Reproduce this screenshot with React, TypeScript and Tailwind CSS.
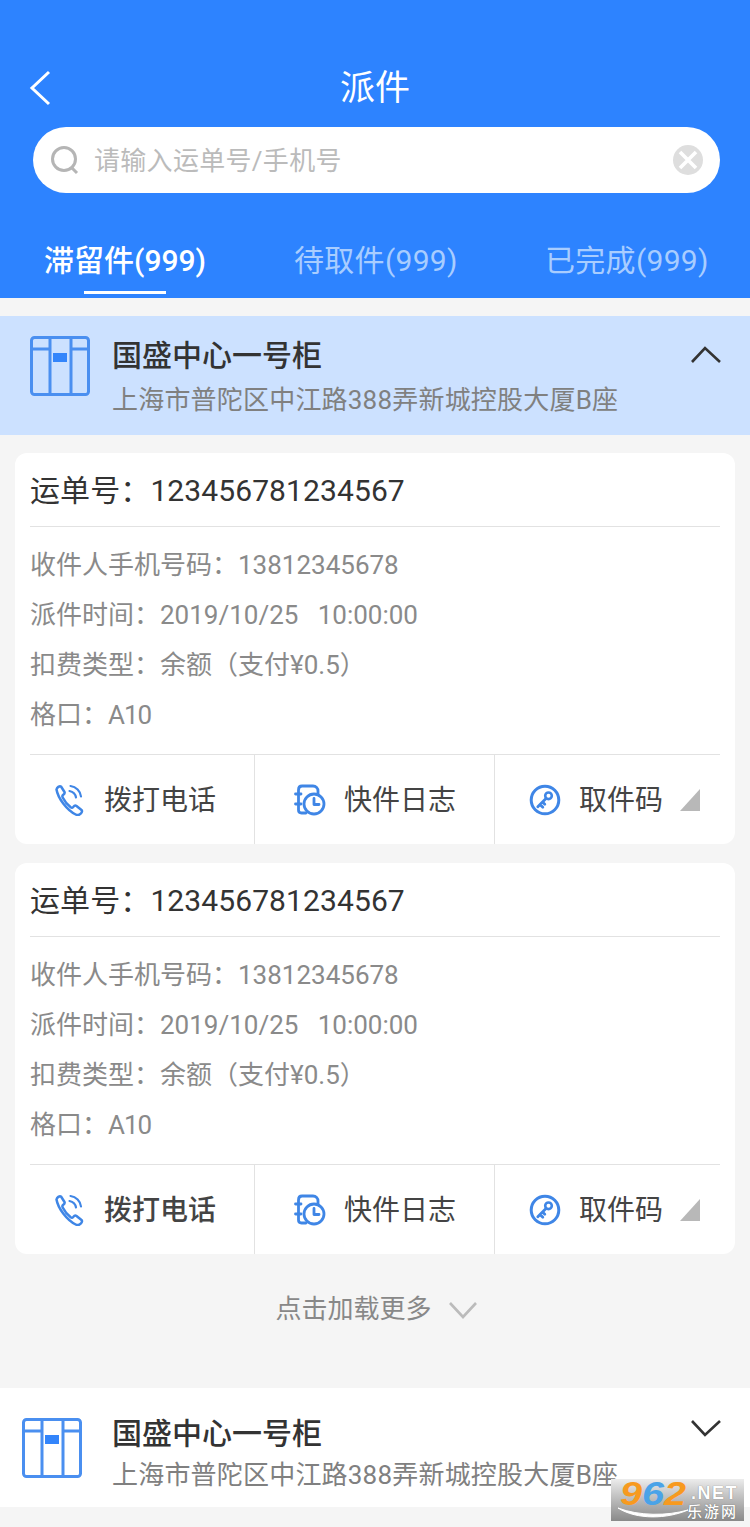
import React from "react";

const FONT = "font-['Roboto','Noto_Sans_CJK_SC',sans-serif]";

function Cabinet({ x = "" }: { x?: string }) {
  return (
    <svg width="60" height="60" viewBox="0 0 60 60" fill="none" className={x}>
      <rect x="1.500" y="1.500" width="57" height="57" rx="3" stroke="#4a8ff0" strokeWidth="3" />
      <path d="M20 2V58M41 2V58M2 13H20M41 13H58" stroke="#4a8ff0" strokeWidth="3" />
      <rect x="23" y="17" width="14" height="9" fill="#3385fb" />
    </svg>
  );
}

function PhoneIcon() {
  return (
    <svg width="33" height="32" viewBox="0 0 32 32" fill="none" stroke="#3f86e6" strokeWidth="2.500" strokeLinecap="round" strokeLinejoin="round">
      <path d="M3 5.500C3.500 3.500 6 1.500 7.500 2.500L11 8c.5 1-.5 2.200-1.500 3-.8.7-.8 1.500-.3 2.500 1.600 3.200 4.500 7 8 9.800 1 .7 1.800.5 2.500-.3.8-1 2-1.800 3-1.200l5.300 4.200c1 .9.4 2.500-.8 3.700-1.200 1.200-3 1.800-5 .8C13.500 26 4.500 14.500 3 5.500z" />
      <path d="M16 7c3.500.7 6 3.300 6.500 6.500M17 2c5.500.8 10 5.200 10.500 10.500" strokeWidth="2.200" />
    </svg>
  );
}

function LogIcon() {
  return (
    <svg width="32" height="32" viewBox="0 0 32 32" fill="none" stroke="#3f86e6" strokeWidth="2.800" strokeLinecap="round" strokeLinejoin="round">
      <path d="M12 29H7.500C5.500 29 4.500 27.800 4.500 26V6C4.500 3.800 5.800 2 8 2h11c3 0 5 2 5 5v3" />
      <path d="M1.500 10H7M1.500 20H7" />
      <circle cx="20" cy="20" r="10" />
      <path d="M20 14.500V20.500H25" />
    </svg>
  );
}

function KeyIcon() {
  return (
    <svg width="32" height="32" viewBox="0 0 32 32" fill="none" stroke="#3f86e6" strokeLinecap="round" strokeLinejoin="round">
      <circle cx="16" cy="16" r="13.800" strokeWidth="3" />
      <circle cx="19.500" cy="11.800" r="3.300" strokeWidth="2.600" />
      <path d="M17 14.500L8.800 22.800M11 20.500l2.800 2.800M13.500 18l2.300 2.300" strokeWidth="2.800" />
    </svg>
  );
}

function Action({ icon, label, bold, w, pl, gap, tri }: { icon: React.ReactNode; label: string; bold?: boolean; w: string; pl: string; gap: string; tri?: boolean }) {
  return (
    <div className={`${w} ${pl} ${gap} flex items-center h-full relative`}>
      {icon}
      <span className={`text-[28px] leading-none pt-[2px] text-[#444] ${bold ? "font-medium" : ""}`}>{label}</span>
      {tri ? (
        <svg width="20" height="22" viewBox="0 0 20 22" className="-ml-px mt-[1px]">
          <path d="M20 0V22H0Z" fill="#b8b8b8" />
        </svg>
      ) : null}
    </div>
  );
}

function Card({ bold }: { bold?: boolean }) {
  return (
    <div className="mx-[15px] h-[391px] bg-white rounded-[12px] flex flex-col">
      <div className="mx-[15px] h-[74px] border-b border-[#e2e2e2] flex items-center pt-[3px]">
        <span className="text-[30px] leading-none text-[#333] tracking-[0.1px]">运单号：123456781234567</span>
      </div>
      <div className="mx-[15px] h-[228px] pt-[13px] border-b border-[#e2e2e2] text-[26px] text-[#8a8a8a] leading-[50px]">
        <div>收件人手机号码：13812345678</div>
        <div className="whitespace-pre">派件时间：2019/10/25   10:00:00</div>
        <div>扣费类型：余额（支付¥0.5）</div>
        <div>
          格口：<span className="tracking-[-1px]">A10</span>
        </div>
      </div>
      <div className="flex-1 flex pl-[15px]">
        <div className="w-[225px] border-r border-[#e2e2e2] h-full">
          <Action w="w-full" pl="pl-[23px]" gap="gap-[18px]" icon={<PhoneIcon />} label="拨打电话" bold={bold} />
        </div>
        <div className="w-[240px] border-r border-[#e2e2e2] h-full">
          <Action w="w-full" pl="pl-[39px]" gap="gap-[18px]" icon={<LogIcon />} label="快件日志" />
        </div>
        <Action w="w-[240px]" pl="pl-[34px]" gap="gap-[18px]" icon={<KeyIcon />} label="取件码" tri />
      </div>
    </div>
  );
}

function Group({ active }: { active?: boolean }) {
  return (
    <div className={`h-[119px] relative flex ${active ? "bg-[#cce1ff]" : "bg-white"}`}>
      <Cabinet x={active ? "ml-[30px] mt-[20px]" : "ml-[22px] mt-[30px]"} />
      <div className={`absolute left-[112px] ${active ? "top-[24px]" : "top-[30px]"}`}>
        <div className="text-[30px] leading-[32px] font-medium text-[#333]">国盛中心一号柜</div>
        <div className={`text-[26px] leading-[30px] text-[#808080] tracking-[0.2px] ${active ? "mt-[13px]" : "mt-[10px]"}`}>上海市普陀区中江路388弄新城控股大厦B座</div>
      </div>
      <svg width="32" height="20" viewBox="0 0 32 20" fill="none" stroke="#333" strokeWidth="2.600" className={`absolute left-[690px] ${active ? "top-[29px]" : "top-[30px]"}`}>
        <path d={active ? "M2 17L15 3L30 17" : "M2 3L15 17L30 3"} />
      </svg>
    </div>
  );
}

export default function App() {
  return (
    <div className={`${FONT} w-[750px] h-[1527px] bg-[#f5f5f5] relative overflow-hidden`}>
      <div className="h-[298px] bg-[#2d83ff] relative">
        <div className="h-[127px] relative flex justify-center pt-[68px]">
          <span className="text-[35px] leading-[42px] text-white">派件</span>
          <svg width="24" height="36" viewBox="0 0 24 36" fill="none" stroke="#fff" strokeWidth="3" className="absolute left-[29px] top-[70px]">
            <path d="M20 2L3 18L20 34" />
          </svg>
        </div>
        <div className="mx-[33px] w-[687px] h-[66px] bg-white rounded-full flex items-center pl-[17px] pr-[17px]">
          <svg width="30" height="30" viewBox="0 0 30 30" fill="none" stroke="#b5b5b5" strokeWidth="3">
            <circle cx="14" cy="14" r="11.500" />
            <path d="M22 23L27 28" />
          </svg>
          <span className="ml-[14px] pt-[2px] text-[26px] leading-none text-[#bbb] tracking-[0.3px]">请输入运单号/手机号</span>
          <svg width="30" height="30" viewBox="0 0 30 30" className="ml-auto">
            <circle cx="15" cy="15" r="15" fill="#dedede" />
            <path d="M7 7L23 23M23 7L7 23" stroke="#fff" strokeWidth="3.600" />
          </svg>
        </div>
        <div className="relative h-[105px] flex pl-[44px] pt-[46px] text-[30px] leading-[44px] tracking-[0.3px]">
          <span className="w-[250px] text-white font-medium tracking-normal">滞留件(999)</span>
          <span className="w-[251px] text-[#a8cdff]">待取件(999)</span>
          <span className="text-[#a8cdff]">已完成(999)</span>
          <div className="absolute left-[84px] top-[98px] w-[82px] h-[3px] bg-white" />
        </div>
      </div>
      <div className="h-[18px]" />
      <Group active />
      <div className="h-[18px]" />
      <Card />
      <div className="h-[19px]" />
      <Card bold />
      <div className="h-[134px] flex justify-center pt-[36px] text-[26px] leading-[38px] text-[#888]">
        <span className="ml-[3px]">点击加载更多</span>
        <svg width="30" height="20" viewBox="0 0 30 20" fill="none" stroke="#bbb" strokeWidth="2.600" className="ml-[16px] mt-[10px]">
          <path d="M2 3L15 17L28 3" />
        </svg>
      </div>
      <Group />
      <div className="absolute left-[611px] top-[1479px] w-[133px] h-[42px] bg-gradient-to-b from-[#ececec] to-[#8a8a8a]">
        <span className="absolute left-[9px] top-[-2px] origin-left scale-x-[1.2] text-[33px] leading-[34px] font-['Liberation_Sans',sans-serif] font-bold italic whitespace-nowrap">
          <span className="text-[#f79a1f]">9</span>
          <span className="text-[#4aa3e8]">6</span>
          <span className="text-[#f79a1f]">2</span>
        </span>
        <span className="absolute left-[80px] top-[3px] text-[18px] leading-[22px] font-['Liberation_Sans',sans-serif] font-bold text-white tracking-[1.500px] [text-shadow:0_0_1px_#666]">.NET</span>
        <span className="absolute left-[76px] top-[24px] text-[15px] leading-[18px] text-white font-medium tracking-[2px] [text-shadow:0_0_1px_#555]">乐游网</span>
        <svg width="72" height="14" viewBox="0 0 72 14" fill="none" className="absolute left-[6px] top-[27px]">
          <path d="M1 2C20 14 50 13 71 4C50 10 22 10 1 2Z" fill="#fff" stroke="#fff" />
        </svg>
      </div>
    </div>
  );
}
